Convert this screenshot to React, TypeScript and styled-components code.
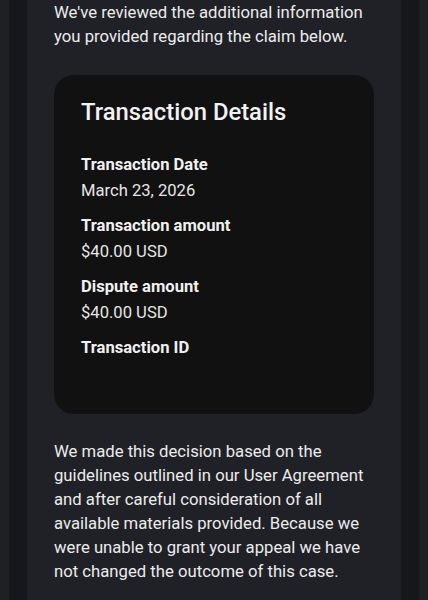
import React from "react";
import styled, { createGlobalStyle } from "styled-components";

const Global = createGlobalStyle`
  html, body { margin: 0; padding: 0; background: #1e2024; }
  body { font-family: Roboto, "Noto Sans", Arial, sans-serif; -webkit-font-smoothing: antialiased; }
`;

const Page = styled.div`
  width: 428px;
  height: 600px;
  overflow: hidden;
  background: #1e2024;
  padding: 0 9px;
  box-sizing: border-box;
`;

const Frame = styled.div`
  height: 100%;
  background: #16171b;
  padding: 0 18px;
`;

const Panel = styled.main`
  height: 100%;
  background: #202126;
  padding: 1px 27px 0;
  box-sizing: border-box;
  display: flex;
  flex-direction: column;
`;

const Para = styled.p<{ $gapTop?: number }>`
  margin: ${(p) => p.$gapTop ?? 0}px 0 0;
  font-size: 16.7px;
  line-height: 24px;
  color: #ececec;
  font-weight: 400;
`;

const Card = styled.section`
  margin-top: 26px;
  background: #111111;
  border-radius: 20px;
  padding: 21px 27px 0;
  height: 339px;
  box-sizing: border-box;
`;

const Title = styled.h2`
  margin: 0 0 25px;
  font-size: 23.8px;
  line-height: 32px;
  font-weight: 500;
  color: #f2f2f2;
`;

const Field = styled.div`
  display: flex;
  flex-direction: column;
  gap: 2px;
  margin-bottom: 11px;
`;

const Label = styled.div`
  font-size: 16.6px;
  line-height: 24px;
  font-weight: 700;
  color: #f0f0f0;
`;

const Value = styled.div`
  font-size: 16.6px;
  line-height: 24px;
  color: #e6e6e6;
`;

const fields = [
  { label: "Transaction Date", value: "March 23, 2026" },
  { label: "Transaction amount", value: "$40.00 USD" },
  { label: "Dispute amount", value: "$40.00 USD" },
  { label: "Transaction ID", value: "" },
];

export default function App() {
  return (
    <>
      <Global />
      <Page>
        <Frame>
          <Panel>
            <Para>
              We've reviewed the additional information you provided regarding the claim below.
            </Para>
            <Card>
              <Title>Transaction Details</Title>
              {fields.map((f) => (
                <Field key={f.label}>
                  <Label>{f.label}</Label>
                  {f.value && <Value>{f.value}</Value>}
                </Field>
              ))}
            </Card>
            <Para $gapTop={26}>
              We made this decision based on the guidelines outlined in our User Agreement and after
              careful consideration of all available materials provided. Because we were unable to
              grant your appeal we have not changed the outcome of this case.
            </Para>
          </Panel>
        </Frame>
      </Page>
    </>
  );
}
